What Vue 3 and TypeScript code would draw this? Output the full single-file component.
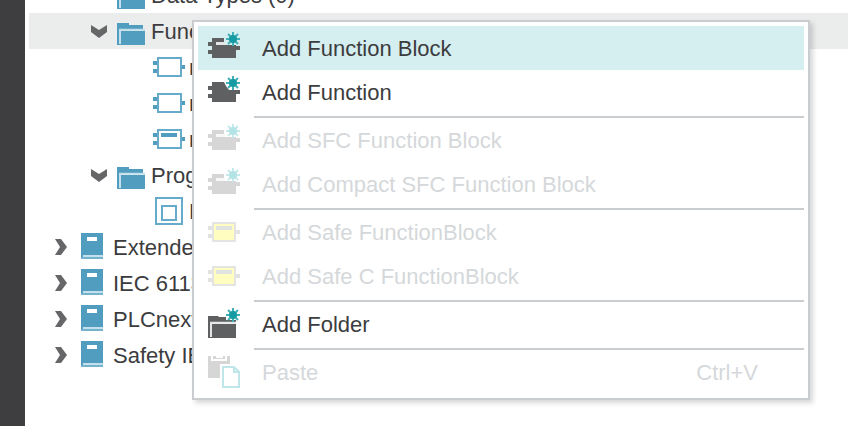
<script setup lang="ts">
type TreeIcon = 'folder' | 'block' | 'safe' | 'program' | 'book'
type MenuIcon = 'fb' | 'fn' | 'safe' | 'folder' | 'paste'

interface TreeRow {
  label: string
  level: number
  icon: TreeIcon
  chevron?: 'down' | 'right'
  selected?: boolean
}

interface MenuEntry {
  label: string
  icon: MenuIcon
  disabled?: boolean
  active?: boolean
  shortcut?: string
}

const rows: TreeRow[] = [
  { label: 'Data Types (0)', level: 2, icon: 'folder' },
  { label: 'Functions', level: 2, icon: 'folder', chevron: 'down', selected: true },
  { label: 'r', level: 3, icon: 'block' },
  { label: 'r', level: 3, icon: 'block' },
  { label: 'r', level: 3, icon: 'safe' },
  { label: 'Programs', level: 2, icon: 'folder', chevron: 'down' },
  { label: 'M', level: 3, icon: 'program' },
  { label: 'Extended', level: 1, icon: 'book', chevron: 'right' },
  { label: 'IEC 61131', level: 1, icon: 'book', chevron: 'right' },
  { label: 'PLCnext', level: 1, icon: 'book', chevron: 'right' },
  { label: 'Safety IEC', level: 1, icon: 'book', chevron: 'right' },
]

const groups: MenuEntry[][] = [
  [
    { label: 'Add Function Block', icon: 'fb', active: true },
    { label: 'Add Function', icon: 'fn' },
  ],
  [
    { label: 'Add SFC Function Block', icon: 'fb', disabled: true },
    { label: 'Add Compact SFC Function Block', icon: 'fb', disabled: true },
  ],
  [
    { label: 'Add Safe FunctionBlock', icon: 'safe', disabled: true },
    { label: 'Add Safe C FunctionBlock', icon: 'safe', disabled: true },
  ],
  [{ label: 'Add Folder', icon: 'folder' }],
  [{ label: 'Paste', icon: 'paste', disabled: true, shortcut: 'Ctrl+V' }],
]
</script>

<template>
  <main class="app">
    <aside class="rail"></aside>
    <section class="panel">
      <ul class="tree" role="tree">
        <li
          v-for="(row, i) in rows"
          :key="i"
          role="treeitem"
          :class="['row', 'level-' + row.level, { selected: row.selected }]"
        >
          <svg class="chevron" viewBox="0 0 24 24" aria-hidden="true">
            <path v-if="row.chevron === 'down'" d="M4 6l8 5 8-5v7l-8 6-8-6z" />
            <path v-if="row.chevron === 'right'" d="M6 4h6l6 8-6 8H6l5-8z" />
          </svg>
          <svg class="icon tree-icon" viewBox="0 0 32 32" aria-hidden="true">
            <g v-if="row.icon === 'folder'">
              <path class="solid" d="M2 8h12v2h14v4H4v14h2v2H2z" />
              <path class="pale" d="M4 13.8h26v2H6V29H4z" />
              <path class="solid" d="M6 16h24v14H6z" />
            </g>
            <g v-else-if="row.icon === 'block' || row.icon === 'safe'">
              <path class="solid" d="M0 10h4v4H0zM0 18h4v4H0zM28 14h4v4h-4z" />
              <rect class="line" x="5" y="7" width="23" height="18" />
              <rect v-if="row.icon === 'safe'" class="solid" x="8" y="10" width="16" height="4" />
            </g>
            <g v-else-if="row.icon === 'program'">
              <rect class="line" x="3" y="3" width="26" height="26" />
              <rect class="line" x="9" y="11" width="14" height="14" />
            </g>
            <g v-else>
              <path class="solid" d="M4 2h22v24H4z" />
              <path class="edge" d="M4 26h22v2H4z" />
              <path class="slot" d="M10 6h10v4H10z" />
              <path class="pale" d="M6 24h20v2H6z" />
            </g>
          </svg>
          <span class="text">{{ row.label }}</span>
        </li>
      </ul>
    </section>

    <div class="menu" role="menu">
      <div v-for="(group, g) in groups" :key="g" class="group" role="group">
        <button
          v-for="entry in group"
          :key="entry.label"
          type="button"
          role="menuitem"
          :class="['entry', { active: entry.active }]"
          :disabled="entry.disabled"
        >
          <svg class="icon" viewBox="0 0 32 32" aria-hidden="true">
            <g v-if="entry.icon === 'fb'">
              <path class="dark" d="M0 10h4V6h12v4H8v3h20v1h4v4h-4v8H4v-4H0v-4h4v-4H0z" />
              <path class="glint" d="M8 10h9v3H8z" />
            </g>
            <g v-else-if="entry.icon === 'fn'">
              <path class="dark" d="M0 10h4V6h12l2 4 3 4h11v4h-4v8H4v-4H0v-4h4v-4H0z" />
            </g>
            <g v-else-if="entry.icon === 'folder'">
              <path class="dark" d="M0 8h10l1 1h7v5H2v14h2v2H0z" />
              <path class="dark" d="M18 12h10v2H18z" />
              <path class="glint" d="M2 13.800h26v2H4V29H2z" />
              <path class="dark" d="M4 16h24v14H4z" />
            </g>
            <g v-else-if="entry.icon === 'safe'">
              <path class="safe-pin" d="M0 10h4v4H0zM0 18h4v4H0zM28 14h4v4h-4z" />
              <rect class="safe-body" x="5" y="7" width="22" height="18" />
              <rect class="safe-pin" x="8" y="10" width="16" height="4" />
            </g>
            <g v-else>
              <path class="dark" d="M0 0h22v22H0z" />
              <path class="clip" d="M4 0v4h14V0M9 0v1h5V0" />
              <path class="halo" d="M12 8h15l6 6v19H12z" />
              <path class="page" d="M15 11h11l5 5v15H15zM26 11v5h5" />
            </g>
            <g v-if="['fb', 'fn', 'folder'].includes(entry.icon)">
              <circle class="star-gap" cx="25" cy="7" r="5" />
              <path class="ray" d="M25 0v14M18 7h14M20 2l10 10M30 2l-10 10" />
              <circle class="star" cx="25" cy="7" r="4" />
            </g>
          </svg>
          <span class="text">{{ entry.label }}</span>
          <kbd v-if="entry.shortcut" class="text">{{ entry.shortcut }}</kbd>
        </button>
      </div>
    </div>
  </main>
</template>

<style>
body {
  background: #fff;
}
</style>

<style scoped>
.app {
  position: relative;
  display: flex;
  height: 100vh;
  overflow: hidden;
  background: #fff;
  color: #3c3c3e;
  font: 22px/34px "Liberation Sans", Arial, sans-serif;
}
.rail {
  flex: 0 0 25px;
  background: #3e3e40;
}
.panel {
  flex: 1;
  min-width: 0;
  padding-left: 4px;
}
.tree {
  margin: -23px 0 0;
  padding: 0;
  list-style: none;
}
.row {
  display: flex;
  align-items: center;
  gap: 4px;
  height: 36px;
  padding-left: 20px;
  white-space: nowrap;
}
.row.level-2 {
  padding-left: 58px;
}
.row.level-3 {
  padding-left: 96px;
}
.row.selected {
  background: #ebedec;
}
.text {
  padding-top: 2px;
}
.chevron {
  flex: none;
  width: 24px;
  height: 24px;
  fill: #666668;
}
.icon {
  flex: none;
  width: 32px;
  height: 32px;
}
.tree-icon .solid {
  fill: #519dbf;
}
.tree-icon .pale {
  fill: #c3dfeb;
}
.tree-icon .edge {
  fill: #74b2cd;
}
.tree-icon .slot {
  fill: #fff;
}
.tree-icon .line {
  fill: #fff;
  stroke: #66abc9;
  stroke-width: 2;
}
.menu {
  position: absolute;
  top: 20px;
  left: 192px;
  right: 38px;
  padding: 4px;
  border: 2px solid #c9cdd0;
  background: #fff;
  box-shadow: 3px 3px 5px rgba(0, 0, 0, 0.16);
}
.group + .group::before {
  content: "";
  display: block;
  height: 2px;
  margin: 2px 0 0 56px;
  background: #c9cdd0;
}
.entry {
  display: flex;
  align-items: center;
  gap: 22px;
  width: 100%;
  height: 44px;
  padding: 0 46px 0 10px;
  border: 0;
  background: transparent;
  color: #3c3c3e;
  font: inherit;
  text-align: left;
  white-space: nowrap;
}
.entry.active {
  background: #d5eeef;
}
.entry:disabled {
  color: #d5d8da;
}
.entry kbd {
  margin-left: auto;
  font: inherit;
}
.dark {
  fill: #5f6062;
}
.glint {
  fill: #e4e6e6;
}
.star-gap {
  fill: #fff;
}
.active .star-gap {
  fill: #d5eeef;
}
.star {
  fill: #169ba3;
}
.ray {
  fill: none;
  stroke: #3fb0b6;
  stroke-width: 2;
}
.entry:disabled .dark {
  fill: #d6d6d6;
}
.entry:disabled .glint {
  fill: #f8f8f8;
}
.entry:disabled .star {
  fill: #b4e3e6;
}
.entry:disabled .ray {
  stroke: #c6eaec;
}
.safe-pin {
  fill: #e1e2e2;
}
.safe-body {
  fill: #fffdc0;
  stroke: #e4e5e3;
  stroke-width: 2;
}
.clip {
  fill: none;
  stroke: #fff;
  stroke-width: 2;
}
.halo {
  fill: #fff;
}
.page {
  fill: #fff;
  stroke: #bfe6e8;
  stroke-width: 2;
}
</style>
